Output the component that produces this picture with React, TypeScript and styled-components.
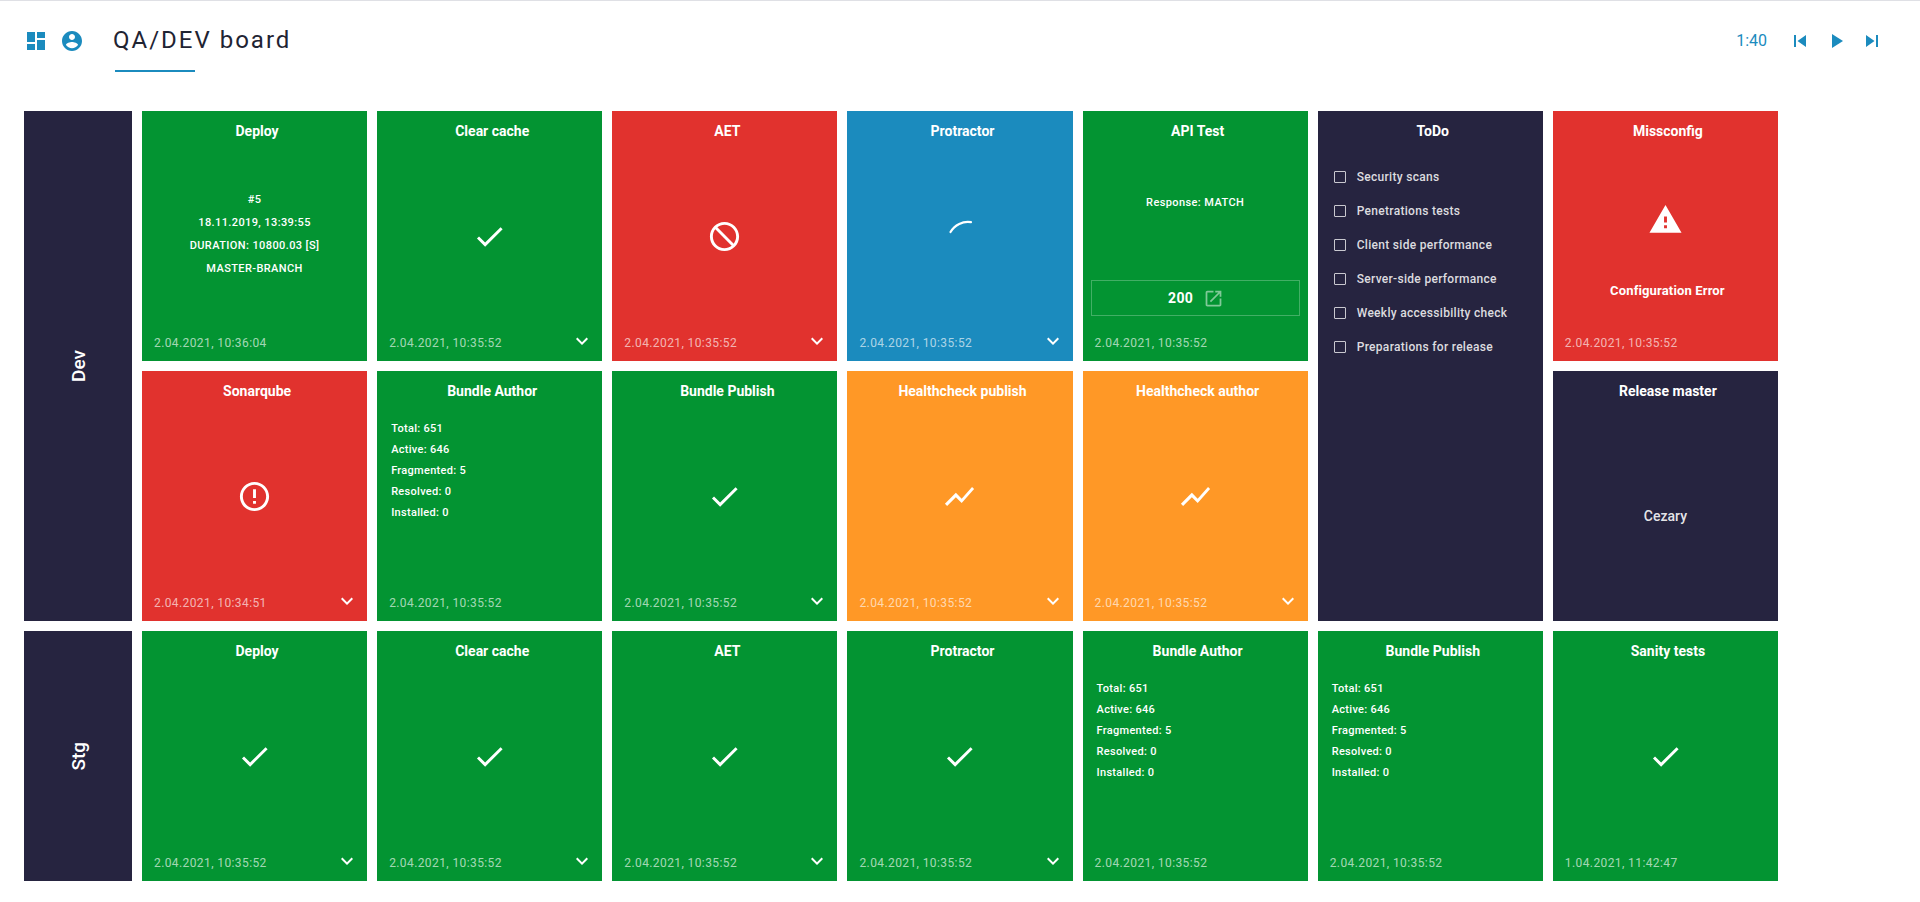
import React from 'react';
import styled, { createGlobalStyle } from 'styled-components';

const colors = {
  green: '#039432',
  red: '#e1322e',
  blue: '#1b8bbe',
  orange: '#ff9826',
  navy: '#262440',
};

type Tone = keyof typeof colors;

const GlobalStyle = createGlobalStyle`
  html, body {
    margin: 0;
    padding: 0;
    background: #fff;
    font-family: Roboto, "Liberation Sans", sans-serif;
  }
`;

const Page = styled.div`
  height: 902px;
  box-sizing: border-box;
  border-top: 1px solid #dfe0e5;
  overflow: hidden;
`;

const Header = styled.header`
  height: 110px;
  box-sizing: border-box;
  padding: 28px 36px 0 24px;
  display: flex;
  align-items: flex-start;
`;

const NavIcons = styled.div`
  display: flex;
  gap: 12px;
  color: ${colors.blue};
`;

const BoardTitle = styled.h1`
  position: relative;
  margin: -1px 0 0 29px;
  font-size: 24px;
  line-height: 24px;
  font-weight: 400;
  letter-spacing: 2px;
  color: #1f2433;

  &::after {
    content: '';
    position: absolute;
    left: 2px;
    top: 42px;
    width: 80px;
    height: 2px;
    background: ${colors.blue};
  }
`;

const Player = styled.div`
  margin-left: auto;
  display: flex;
  align-items: center;
  gap: 12px;
  color: ${colors.blue};
`;

const PlayerTime = styled.span`
  font-size: 16px;
  font-weight: 400;
  line-height: 24px;
  margin-right: 9px;
`;

const Board = styled.main`
  margin-left: 24px;
  width: 1754px;
  display: grid;
  grid-template-columns: 108px repeat(7, minmax(0, 1fr));
  grid-template-rows: repeat(3, 250px);
  gap: 10px;
`;

const EnvLabel = styled.div<{ $rows: number }>`
  grid-row: span ${(p) => p.$rows};
  background: ${colors.navy};
  color: #fff;
  display: flex;
  align-items: center;
  justify-content: center;

  span {
    writing-mode: vertical-rl;
    transform: rotate(180deg);
    font-size: 19px;
    font-weight: 500;
  }
`;

const CardBox = styled.section<{ $tone: Tone; $rows: number }>`
  grid-row: span ${(p) => p.$rows};
  background: ${(p) => colors[p.$tone]};
  color: #fff;
  display: grid;
  grid-template-rows: 40px minmax(0, 1fr) 40px;
  min-width: 0;
`;

const CardTitle = styled.h2`
  margin: 0;
  padding-left: 5px;
  font-size: 14px;
  font-weight: 700;
  line-height: 40px;
  text-align: center;
`;

const CardBody = styled.div`
  display: flex;
  flex-direction: column;
  align-items: center;
  justify-content: center;
`;

const DeployBody = styled(CardBody)`
  padding-bottom: 4px;
`;

const CenterLines = styled.div`
  display: flex;
  flex-direction: column;
  gap: 6px;
  font-size: 11px;
  line-height: 17px;
  font-weight: 500;
  letter-spacing: 0.4px;
  text-align: center;
`;

const StatList = styled.ul`
  list-style: none;
  margin: 0;
  padding: 7px 0 0 14px;
  align-self: flex-start;
  height: 100%;
  box-sizing: border-box;
  font-size: 11px;
  line-height: 21px;
  font-weight: 500;
  letter-spacing: 0.3px;
`;

const CardFooter = styled.footer`
  display: flex;
  align-items: center;
  justify-content: space-between;
  padding: 0 8px 0 12px;
`;

const Timestamp = styled.span`
  font-size: 12px;
  letter-spacing: 0.4px;
  line-height: 24px;
  color: rgba(255, 255, 255, 0.65);
  padding-top: 3px;
`;

const ResponseBody = styled(CardBody)`
  justify-content: flex-start;
  padding-top: 43px;
`;

const ResponseText = styled.div`
  font-size: 11px;
  line-height: 17px;
  font-weight: 500;
  letter-spacing: 0.4px;
`;

const StatusBox = styled.div`
  margin-top: 69px;
  width: 209px;
  height: 36px;
  box-sizing: border-box;
  padding-left: 2px;
  border: 1px solid rgba(255, 255, 255, 0.25);
  display: flex;
  align-items: center;
  justify-content: center;
  gap: 10px;
  font-size: 14px;
  font-weight: 700;
  letter-spacing: 0.4px;

  svg {
    opacity: 0.5;
  }
`;

const TodoBody = styled(CardBody)`
  justify-content: flex-start;
`;

const TodoList = styled.ul`
  list-style: none;
  margin: 0;
  padding: 16px 0 0 16px;
  display: flex;
  flex-direction: column;
  gap: 14px;
  align-self: flex-start;
`;

const TodoItem = styled.li`
  display: flex;
  align-items: center;
  gap: 11px;
  height: 20px;
  font-size: 12px;
  font-weight: 500;
  letter-spacing: 0.3px;
  color: rgba(255, 255, 255, 0.85);
`;

const TodoBox = styled.span`
  width: 12px;
  height: 12px;
  box-sizing: border-box;
  border: 1px solid rgba(255, 255, 255, 0.75);
  border-radius: 1px;
`;

const AlertBody = styled(CardBody)`
  justify-content: flex-start;
  padding-top: 51px;
`;

const AlertText = styled.div`
  margin-top: 45px;
  padding-left: 4px;
  font-size: 13px;
  line-height: 18px;
  font-weight: 700;
  letter-spacing: 0.15px;
`;

const OwnerBody = styled(CardBody)`
  padding-top: 40px;
  box-sizing: border-box;
`;

const OwnerName = styled.div`
  font-size: 14px;
  font-weight: 500;
  color: rgba(255, 255, 255, 0.9);
`;

const MuiIcon = ({ d, size = 24 }: { d: string; size?: number }) => (
  <svg width={size} height={size} viewBox="0 0 24 24" fill="currentColor">
    <path d={d} />
  </svg>
);

const icons = {
  dashboard: 'M3 13h8V3H3v10zm0 8h8v-6H3v6zm10 0h8V11h-8v10zm0-18v6h8V3h-8z',
  account:
    'M12 2C6.48 2 2 6.48 2 12s4.48 10 10 10 10-4.48 10-10S17.52 2 12 2zm0 3c1.66 0 3 1.34 3 3s-1.34 3-3 3-3-1.34-3-3 1.34-3 3-3zm0 14.2c-2.5 0-4.71-1.28-6-3.22.03-1.99 4-3.08 6-3.08 1.99 0 5.97 1.09 6 3.08-1.29 1.94-3.5 3.22-6 3.22z',
  prev: 'M6 6h2v12H6zm3.5 6l8.5 6V6z',
  play: 'M8 5v14l11-7z',
  next: 'M6 18l8.5-6L6 6v12zM16 6v12h2V6h-2z',
  check: 'M9 16.17L4.83 12l-1.41 1.41L9 19 21 7l-1.41-1.41z',
  block:
    'M12 2C6.48 2 2 6.48 2 12s4.48 10 10 10 10-4.48 10-10S17.52 2 12 2zm0 18c-4.42 0-8-3.58-8-8 0-1.85.63-3.55 1.69-4.9L16.9 18.31C15.55 19.37 13.85 20 12 20zm6.31-3.1L7.1 5.69C8.45 4.63 10.15 4 12 4c4.42 0 8 3.58 8 8 0 1.85-.63 3.55-1.69 4.9z',
  error:
    'M11 15h2v2h-2zm0-8h2v6h-2zm.99-5C6.47 2 2 6.48 2 12s4.47 10 9.99 10C17.52 22 22 17.52 22 12S17.52 2 11.99 2zM12 20c-4.42 0-8-3.58-8-8s3.58-8 8-8 8 3.58 8 8-3.58 8-8 8z',
  trend: 'M3.5 18.49l6-6.01 4 4L22 6.92l-1.41-1.41-7.09 7.97-4-4L2 16.99z',
  warning: 'M1 21h22L12 2 1 21zm12-3h-2v-2h2v2zm0-4h-2v-4h2v4z',
  expand: 'M16.59 8.59L12 13.17 7.41 8.59 6 10l6 6 6-6z',
  open: 'M19 19H5V5h7V3H5c-1.11 0-2 .9-2 2v14c0 1.1.89 2 2 2h14c1.1 0 2-.9 2-2v-7h-2v7zM14 3v2h3.59l-9.83 9.83 1.41 1.41L19 6.41V10h2V3h-7z',
};

// frozen frame of the loading spinner
const SpinnerArc = () => (
  <svg width="40" height="40" viewBox="0 0 40 40" fill="none">
    <path
      d="M10.5 16A20 20 0 0 1 31 6.2"
      stroke="currentColor"
      strokeWidth="2.2"
      strokeLinecap="round"
    />
  </svg>
);

const Card = ({
  title,
  tone = 'green',
  date,
  expand = true,
  rows = 1,
  children,
}: {
  title: string;
  tone?: Tone;
  date?: string;
  expand?: boolean;
  rows?: number;
  children: React.ReactNode;
}) => (
  <CardBox $tone={tone} $rows={rows}>
    <CardTitle>{title}</CardTitle>
    {children}
    <CardFooter>
      {date && <Timestamp>{date}</Timestamp>}
      {expand && <MuiIcon d={icons.expand} />}
    </CardFooter>
  </CardBox>
);

const IconBody = ({ d }: { d: string }) => (
  <CardBody>
    <MuiIcon d={d} size={35} />
  </CardBody>
);

const Stats = () => (
  <CardBody>
    <StatList>
      <li>Total: 651</li>
      <li>Active: 646</li>
      <li>Fragmented: 5</li>
      <li>Resolved: 0</li>
      <li>Installed: 0</li>
    </StatList>
  </CardBody>
);

const STAMP = '2.04.2021, 10:35:52';

const todos = [
  'Security scans',
  'Penetrations tests',
  'Client side performance',
  'Server-side performance',
  'Weekly accessibility check',
  'Preparations for release',
];

export default function App() {
  return (
    <Page>
      <GlobalStyle />
      <Header>
        <NavIcons>
          <MuiIcon d={icons.dashboard} />
          <MuiIcon d={icons.account} />
        </NavIcons>
        <BoardTitle>QA/DEV board</BoardTitle>
        <Player>
          <PlayerTime>1:40</PlayerTime>
          <MuiIcon d={icons.prev} />
          <MuiIcon d={icons.play} />
          <MuiIcon d={icons.next} />
        </Player>
      </Header>

      <Board>
        <EnvLabel $rows={2}>
          <span>Dev</span>
        </EnvLabel>
        <Card title="Deploy" date="2.04.2021, 10:36:04" expand={false}>
          <DeployBody>
            <CenterLines>
              <div>#5</div>
              <div>18.11.2019, 13:39:55</div>
              <div>DURATION: 10800.03 [S]</div>
              <div>MASTER-BRANCH</div>
            </CenterLines>
          </DeployBody>
        </Card>
        <Card title="Clear cache" date={STAMP}>
          <IconBody d={icons.check} />
        </Card>
        <Card title="AET" tone="red" date={STAMP}>
          <IconBody d={icons.block} />
        </Card>
        <Card title="Protractor" tone="blue" date={STAMP}>
          <CardBody>
            <SpinnerArc />
          </CardBody>
        </Card>
        <Card title="API Test" date={STAMP} expand={false}>
          <ResponseBody>
            <ResponseText>Response: MATCH</ResponseText>
            <StatusBox>
              <span>200</span>
              <MuiIcon d={icons.open} size={21} />
            </StatusBox>
          </ResponseBody>
        </Card>
        <Card title="ToDo" tone="navy" rows={2} expand={false}>
          <TodoBody>
            <TodoList>
              {todos.map((todo) => (
                <TodoItem key={todo}>
                  <TodoBox />
                  {todo}
                </TodoItem>
              ))}
            </TodoList>
          </TodoBody>
        </Card>
        <Card title="Missconfig" tone="red" date={STAMP} expand={false}>
          <AlertBody>
            <MuiIcon d={icons.warning} size={35} />
            <AlertText>Configuration Error</AlertText>
          </AlertBody>
        </Card>

        <Card title="Sonarqube" tone="red" date="2.04.2021, 10:34:51">
          <IconBody d={icons.error} />
        </Card>
        <Card title="Bundle Author" date={STAMP} expand={false}>
          <Stats />
        </Card>
        <Card title="Bundle Publish" date={STAMP}>
          <IconBody d={icons.check} />
        </Card>
        <Card title="Healthcheck publish" tone="orange" date={STAMP}>
          <IconBody d={icons.trend} />
        </Card>
        <Card title="Healthcheck author" tone="orange" date={STAMP}>
          <IconBody d={icons.trend} />
        </Card>
        <Card title="Release master" tone="navy" expand={false}>
          <OwnerBody>
            <OwnerName>Cezary</OwnerName>
          </OwnerBody>
        </Card>

        <EnvLabel $rows={1}>
          <span>Stg</span>
        </EnvLabel>
        <Card title="Deploy" date={STAMP}>
          <IconBody d={icons.check} />
        </Card>
        <Card title="Clear cache" date={STAMP}>
          <IconBody d={icons.check} />
        </Card>
        <Card title="AET" date={STAMP}>
          <IconBody d={icons.check} />
        </Card>
        <Card title="Protractor" date={STAMP}>
          <IconBody d={icons.check} />
        </Card>
        <Card title="Bundle Author" date={STAMP} expand={false}>
          <Stats />
        </Card>
        <Card title="Bundle Publish" date={STAMP} expand={false}>
          <Stats />
        </Card>
        <Card title="Sanity tests" date="1.04.2021, 11:42:47" expand={false}>
          <IconBody d={icons.check} />
        </Card>
      </Board>
    </Page>
  );
}
